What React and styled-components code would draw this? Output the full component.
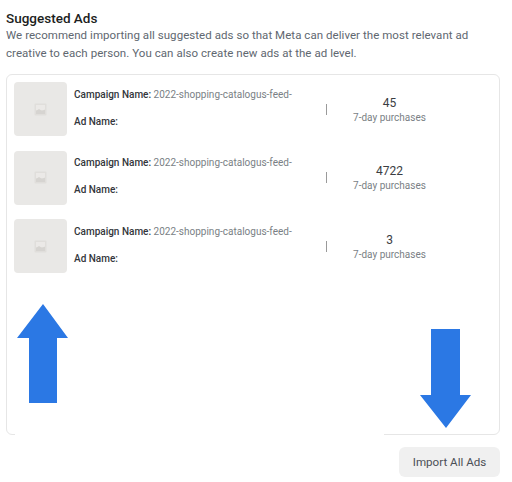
import React from "react";
import styled, { createGlobalStyle } from "styled-components";

const GlobalStyle = createGlobalStyle`
  html, body {
    margin: 0;
    background: #fff;
  }
  body {
    font-family: Roboto, "Liberation Sans", sans-serif;
  }
`;

const Page = styled.div`
  width: 512px;
  height: 482px;
  box-sizing: border-box;
  padding: 10px 12px 0 6px;
  overflow: hidden;
`;

const Title = styled.h2`
  margin: 0;
  font-size: 13.5px;
  line-height: 17px;
  font-weight: 500;
  color: #1c1e21;
`;

const Intro = styled.p`
  margin: 0;
  font-size: 11.5px;
  line-height: 17.5px;
  letter-spacing: 0.05px;
  white-space: nowrap;
  color: #606770;
`;

const Card = styled.div`
  position: relative;
  box-sizing: border-box;
  width: 494px;
  height: 361px;
  margin-top: 12px;
  padding: 7px 7px;
  border: 1px solid #e6e6e6;
  border-radius: 6px;
  display: flex;
  flex-direction: column;
  gap: 14.5px;
`;

const Row = styled.div`
  display: flex;
  align-items: center;
  height: 54px;
`;

const Thumb = styled.div`
  width: 53px;
  height: 54px;
  flex: none;
  border-radius: 4px;
  background: #e9e8e6;
  display: flex;
  align-items: center;
  justify-content: center;
`;

const Names = styled.div`
  width: 252px;
  margin-left: 7px;
  padding-bottom: 2px;
  flex: none;
  display: flex;
  flex-direction: column;
  gap: 13px;
  font-size: 10px;
  line-height: 14px;
`;

const NameLine = styled.div`
  color: #7a7f85;
  white-space: nowrap;
`;

const Label = styled.span`
  font-weight: 500;
  color: #33363b;
`;

const Divider = styled.div`
  width: 1px;
  height: 11px;
  flex: none;
  background: #9a9a9a;
`;

const Stat = styled.div`
  flex: 1;
  padding-top: 1px;
  padding-right: 40px;
  text-align: center;
`;

const StatValue = styled.div`
  font-size: 12px;
  line-height: 16px;
  color: #3a3d42;
`;

const StatLabel = styled.div`
  font-size: 10px;
  line-height: 14px;
  color: #7a7f85;
`;

const Arrow = styled.svg`
  position: absolute;
  display: block;
  left: ${(p) => p.$left}px;
  top: ${(p) => p.$top}px;
`;

/* white patch pasted over the card's bottom edge in the screenshot */
const EdgePatch = styled.div`
  position: absolute;
  left: 8px;
  width: 369px;
  bottom: -2px;
  height: 4px;
  background: #fff;
`;

const Footer = styled.div`
  display: flex;
  justify-content: flex-end;
  margin-top: 12px;
`;

const ImportButton = styled.button`
  width: 101px;
  height: 30px;
  padding: 0;
  border: 0;
  border-radius: 6px;
  background: #f0f0f0;
  font-family: inherit;
  font-size: 11.6px;
  color: #4b4f56;
`;

const PlaceholderIcon = () => (
  <svg width="13" height="13" viewBox="0 0 13 13">
    <rect x="0.5" y="0.5" width="12" height="12" rx="1" fill="#e0dedb" />
    <rect x="2" y="2" width="9" height="5" fill="#ebe9e7" />
    <path d="M2 11 L2 8 L5 6 L8 8 L11 6.5 L11 11 Z" fill="#d6d4d1" />
  </svg>
);

const ads = [{ purchases: 45 }, { purchases: 4722 }, { purchases: 3 }];

const App = () => {
  return (
    <Page>
      <GlobalStyle />
      <Title>Suggested Ads</Title>
      <Intro>
        We recommend importing all suggested ads so that Meta can deliver the most relevant ad
        <br />
        creative to each person. You can also create new ads at the ad level.
      </Intro>
      <Card>
        {ads.map((ad, i) => (
          <Row key={i}>
            <Thumb>
              <PlaceholderIcon />
            </Thumb>
            <Names>
              <NameLine>
                <Label>Campaign Name:</Label> 2022-shopping-catalogus-feed-
              </NameLine>
              <NameLine>
                <Label>Ad Name:</Label>
              </NameLine>
            </Names>
            <Divider />
            <Stat>
              <StatValue>{ad.purchases}</StatValue>
              <StatLabel>7-day purchases</StatLabel>
            </Stat>
          </Row>
        ))}
        <Arrow $left={10} $top={229} width="52" height="100" viewBox="0 0 52 100">
          <path d="M26 0 L51 34 L40 34 L40 99 L12 99 L12 34 L0 34 Z" fill="#2b78e4" />
        </Arrow>
        <Arrow $left={413} $top={254} width="52" height="100" viewBox="0 0 52 100">
          <path d="M11 0 L40 0 L40 66 L51 66 L26 99 L0 66 L11 66 Z" fill="#2b78e4" />
        </Arrow>
        <EdgePatch />
      </Card>
      <Footer>
        <ImportButton>Import All Ads</ImportButton>
      </Footer>
    </Page>
  );
};

export default App;
